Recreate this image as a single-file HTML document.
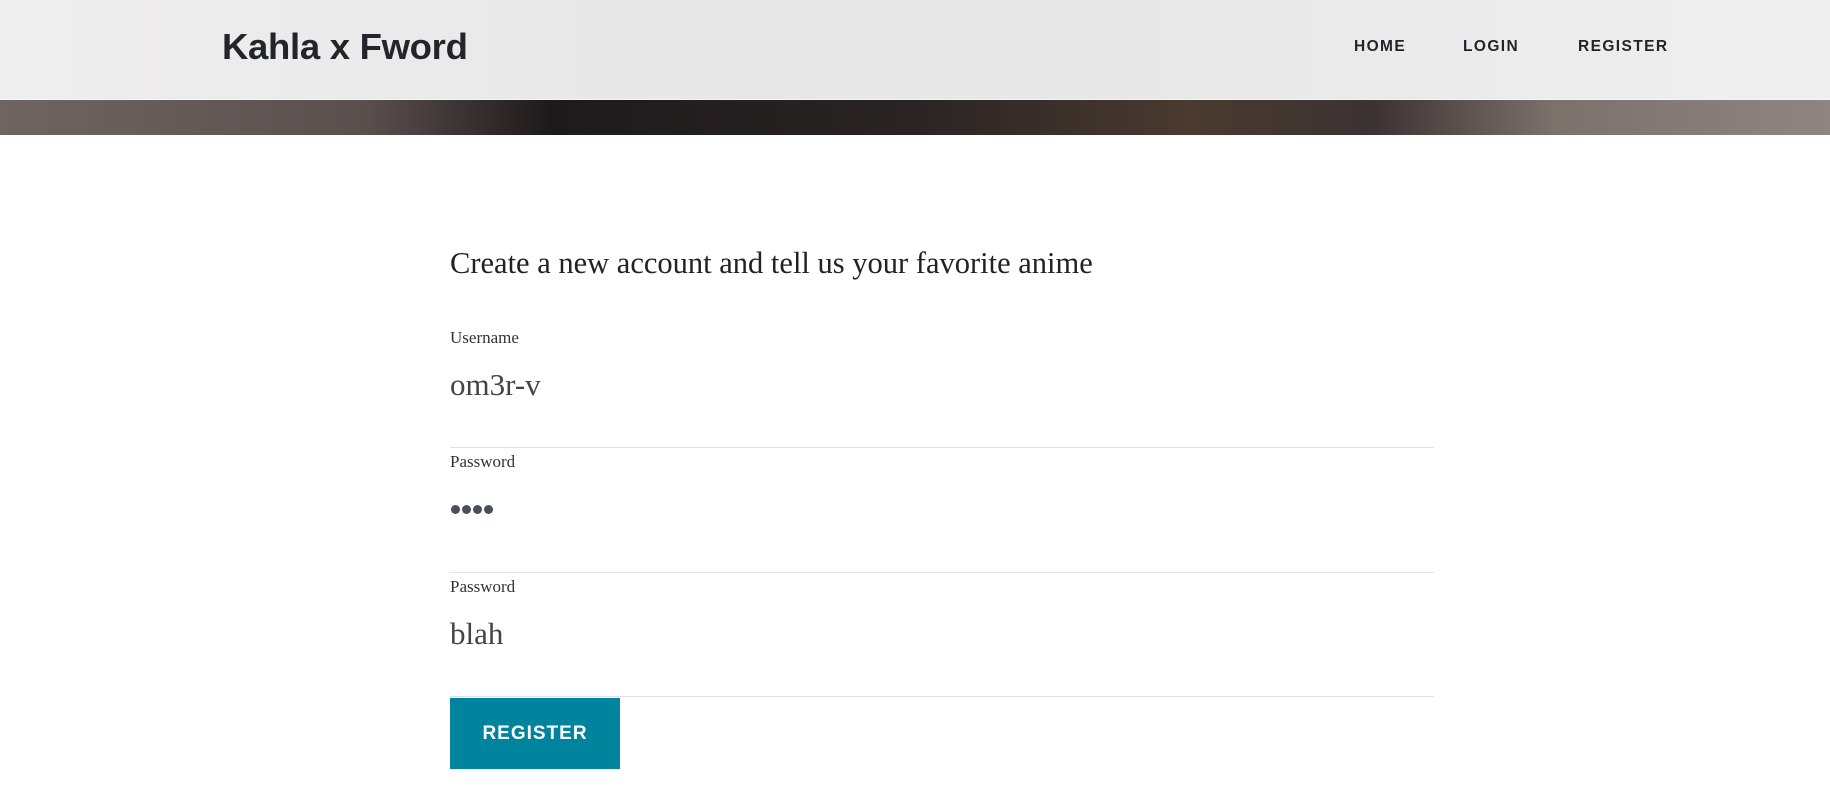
<!DOCTYPE html>
<html><head><meta charset="utf-8"><style>
*{margin:0;padding:0;box-sizing:border-box}
body{width:1830px;height:799px;background:#fff;font-family:"Liberation Sans",sans-serif;position:relative;overflow:hidden}
.hero{position:absolute;left:0;top:0;width:1830px;height:135px;background:linear-gradient(90deg,#6e6562 0%,#5b4f4e 20%,#1e1a1b 30%,#2a2424 50%,#4a3a30 65%,#3b3232 75%,#7d716c 85%,#8e8581 100%)}
.bar{position:absolute;left:0;top:0;width:1830px;height:100px;background:linear-gradient(90deg,#efeeee,#e7e7e8 40%,#e9e9e9 70%,#efefef);border-bottom:1px solid #f5f5f5}
.logo{position:absolute;left:222px;top:26px;font-size:36.5px;font-weight:bold;color:#222529;letter-spacing:-0.3px}
.nav{position:absolute;top:38px;font-size:15.5px;font-weight:bold;letter-spacing:1.4px;color:#212529}
.serif{font-family:"Liberation Serif",serif;position:absolute;left:450px}
h1{font-weight:normal;font-size:30.5px;color:#222;top:246px}
.lbl{font-size:17px;color:#333}
.val{font-size:31px;color:#444}
.line{position:absolute;left:450px;width:984px;height:1px;background:#dee2e6}
.btn{position:absolute;left:450px;top:698px;width:170px;height:71px;background:#00849e;color:#fff;font-weight:bold;font-size:19px;letter-spacing:1px;text-align:center;line-height:71px}
</style></head><body>
<div class="hero"></div>
<div class="bar"></div>
<div class="logo">Kahla x Fword</div>
<div class="nav" style="left:1354px">HOME</div>
<div class="nav" style="left:1463px">LOGIN</div>
<div class="nav" style="left:1578px">REGISTER</div>
<h1 class="serif">Create a new account and tell us your favorite anime</h1>
<div class="serif lbl" style="top:328px">Username</div>
<div class="serif val" style="top:367px">om3r-v</div>
<div class="line" style="top:447px"></div>
<div class="serif lbl" style="top:452px">Password</div>
<svg style="position:absolute;left:450px;top:504px" width="46" height="12"><g fill="#495057"><circle cx="5.5" cy="5.5" r="4.5"/><circle cx="16.5" cy="5.5" r="4.5"/><circle cx="27.5" cy="5.5" r="4.5"/><circle cx="38.5" cy="5.5" r="4.5"/></g></svg>
<div class="line" style="top:572px"></div>
<div class="serif lbl" style="top:577px">Password</div>
<div class="serif val" style="top:616px">blah</div>
<div class="line" style="top:696px"></div>
<div class="btn">REGISTER</div>
</body></html>
